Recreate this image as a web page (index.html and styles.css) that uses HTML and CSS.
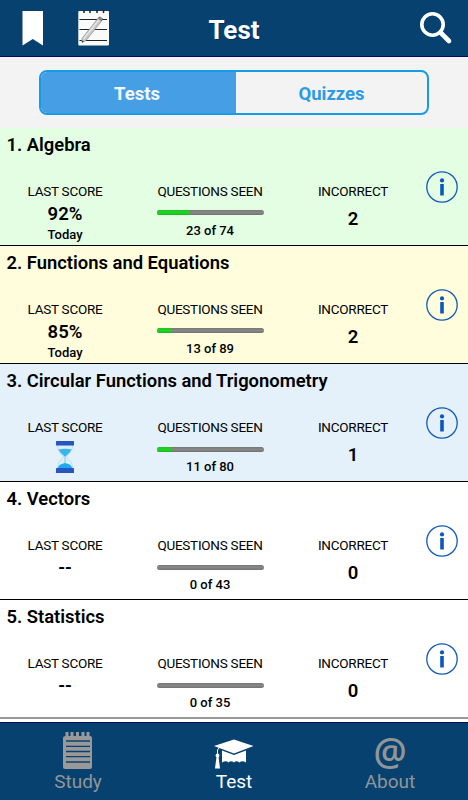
FILE: index.html
```html
<!DOCTYPE html>
<html lang="en">
<head>
<meta charset="utf-8">
<title>Test</title>
<link rel="stylesheet" href="styles.css">
</head>
<body>
<svg width="0" height="0" class="defs" aria-hidden="true">
  <symbol id="info" viewBox="0 0 32 32">
    <circle cx="16" cy="16" r="15.2" fill="none" stroke="#1259b8" stroke-width="1.3"/>
    <circle cx="16" cy="9.4" r="2.1" fill="#0b57c0"/>
    <rect x="14.2" y="13" width="3.6" height="11.5" fill="#0b57c0"/>
  </symbol>
</svg>
<header class="topbar">
  <svg class="bookmark" width="22" height="36" viewBox="0 0 22 36"><path d="M.5 0H21v34.500L10.800 28 .5 34.500z" fill="#fff"/></svg>
  <svg class="notes" width="32" height="36" viewBox="0 0 32 36">
    <rect x=".3" y="1" width="30.700" height="34.500" rx="1" fill="#fafafa"/>
    <path d="M6 0v3M12 0v3M19 0v3M25.500 0v3" stroke="#222" stroke-width="1.500"/>
    <path d="M1.500 9.500h27.500M1.500 19.500h27.500M1.500 30.500h27.500" stroke="#222" stroke-width="1.100"/>
    <path d="M4 28.500 20 8.300 23.800 10.700 8 30.500 4 32.500z" fill="#c9c9c9" stroke="#888" stroke-width=".7"/>
    <path d="M5.500 29 21.500 9" stroke="#eee" stroke-width="1.200"/>
    <path d="M20 8.300 21.500 6.800 24.500 8.500 23.800 10.700z" fill="#999" stroke="#666" stroke-width=".7"/>
    <path d="M4 30.500 4 32.500 6 31.500z" fill="#333"/>
  </svg>
  <h1>Test</h1>
  <svg class="search" width="34" height="34" viewBox="0 0 34 34"><circle cx="12.500" cy="13.500" r="10.700" fill="none" stroke="#fff" stroke-width="3.600"/><path d="M20.500 21.500 29 30" stroke="#fff" stroke-width="4.600" stroke-linecap="round"/></svg>
</header>
<nav class="switcher">
  <div class="segments"><span class="segment active">Tests</span><span class="segment">Quizzes</span></div>
</nav>
<main>
  <section class="row green">
    <h2>1. Algebra</h2>
    <div class="stats">
      <div class="stat"><span class="label">LAST SCORE</span><b class="score">92%</b><span class="small day">Today</span></div>
      <div class="stat"><span class="label">QUESTIONS SEEN</span><div class="track"><div class="fill" style="width:31%"></div></div><span class="small">23 of 74</span></div>
      <div class="stat"><span class="label">INCORRECT</span><b class="wrong">2</b></div>
      <svg class="info"><use href="#info"/></svg>
    </div>
  </section>
  <section class="row yellow">
    <h2>2. Functions and Equations</h2>
    <div class="stats">
      <div class="stat"><span class="label">LAST SCORE</span><b class="score">85%</b><span class="small day">Today</span></div>
      <div class="stat"><span class="label">QUESTIONS SEEN</span><div class="track"><div class="fill" style="width:14.600%"></div></div><span class="small">13 of 89</span></div>
      <div class="stat"><span class="label">INCORRECT</span><b class="wrong">2</b></div>
      <svg class="info"><use href="#info"/></svg>
    </div>
  </section>
  <section class="row blue">
    <h2>3. Circular Functions and Trigonometry</h2>
    <div class="stats">
      <div class="stat"><span class="label">LAST SCORE</span>
        <svg class="hourglass" width="20" height="34" viewBox="0 0 20 34">
          <path d="M2.500 5C2.500 11 6 13 8.500 17 6 20 2.500 22 2.500 28H17.500C17.500 22 14 20 11.500 17 14 13 17.500 11 17.500 5z" fill="#d9f1fc" stroke="#b3d6ee" stroke-width=".8"/>
          <path d="M3.500 9.500Q10 8 16.500 9.500C15 13 12.500 14 10 17 7.500 14 5 13 3.500 9.500z" fill="#36b5ee"/>
          <path d="M3 28C3.500 25 6 24 10 23 14 24 16.500 25 17 28z" fill="#20a9ec"/>
          <path d="M10 17v6" stroke="#60c3ef" stroke-width=".8"/>
          <rect x="1" y="1" width="18" height="4.500" rx=".6" fill="#2856c0"/><rect x="1" y="28" width="18" height="5" rx=".6" fill="#2856c0"/>
        </svg></div>
      <div class="stat"><span class="label">QUESTIONS SEEN</span><div class="track"><div class="fill" style="width:13.800%"></div></div><span class="small">11 of 80</span></div>
      <div class="stat"><span class="label">INCORRECT</span><b class="wrong">1</b></div>
      <svg class="info"><use href="#info"/></svg>
    </div>
  </section>
  <section class="row">
    <h2>4. Vectors</h2>
    <div class="stats">
      <div class="stat"><span class="label">LAST SCORE</span><b class="score">--</b></div>
      <div class="stat"><span class="label">QUESTIONS SEEN</span><div class="track"></div><span class="small">0 of 43</span></div>
      <div class="stat"><span class="label">INCORRECT</span><b class="wrong">0</b></div>
      <svg class="info"><use href="#info"/></svg>
    </div>
  </section>
  <section class="row last">
    <h2>5. Statistics</h2>
    <div class="stats">
      <div class="stat"><span class="label">LAST SCORE</span><b class="score">--</b></div>
      <div class="stat"><span class="label">QUESTIONS SEEN</span><div class="track"></div><span class="small">0 of 35</span></div>
      <div class="stat"><span class="label">INCORRECT</span><b class="wrong">0</b></div>
      <svg class="info"><use href="#info"/></svg>
    </div>
  </section>
</main>
<footer class="tabs">
  <div class="tab">
    <svg width="30" height="38" viewBox="0 0 30 38"><path d="M3 4H27Q29 4 29 6V35Q29 37 27 37H2Q0 37 0 35V6Q0 4 3 4z" fill="#999"/><path d="M4 0v5M9 0v5M14.500 0v5M20 0v5M25 0v5" stroke="#999" stroke-width="3"/><path d="M3 9h24M3 14.300h24M3 19.500h24M3 24.700h24M3 30h24" stroke="#07416f" stroke-width="1.300"/></svg>
    <span>Study</span>
  </div>
  <div class="tab current">
    <svg width="40" height="38" viewBox="0 0 40 38"><path d="M0 14 20 7.500 39.500 14 20 21.500z" fill="#fff"/><path d="M8 18.500 20 23 32 18.500V30.500Q28 28 25.500 30.500 22 28 20 30.500 17 28 14.500 30.500 12 28 8 30.500z" fill="#fff"/><path d="M5 16 3.500 18v5" fill="none" stroke="#fff" stroke-width="1"/><circle cx="3.500" cy="23.500" r="1.900" fill="#fff"/><path d="M2.500 25H4.600L6 36.500H1z" fill="#fff"/></svg>
    <span>Test</span>
  </div>
  <div class="tab"><div class="at">@</div><span>About</span></div>
</footer>
</body>
</html>
```
FILE: styles.css
```css
* { box-sizing: border-box; }
body { margin: 0; width: 468px; height: 800px; overflow: hidden; display: flex; flex-direction: column; background: #fff; color: #000; font-family: Roboto, "Liberation Sans", sans-serif; }
h1, h2 { margin: 0; }
.defs { position: absolute; }
.topbar { height: 57px; flex: none; display: grid; grid-template-columns: 22px 90px 200px 134px; padding-left: 22px; background: #07416f; border-bottom: 1px solid #000a5c; }
.bookmark { margin-top: 11px; }
.notes { margin: 10px 0 0 34px; }
.topbar h1 { color: #fff; font-size: 26px; line-height: 60px; font-weight: 700; text-align: center; text-shadow: 1px 1px #032b66; }
.search { margin: 11px 0 0 86px; }
.switcher { height: 71px; flex: none; padding: 13px 39px; background: #f3f3f3; }
.segments { display: flex; height: 45px; border: 2px solid #189be5; border-radius: 8px; overflow: hidden; }
.segment { flex: 1; text-align: center; font-size: 18.5px; line-height: 44px; font-weight: 700; color: #2c9be5; }
.segment.active { flex: 0 0 195px; padding-right: 3px; background: #469fe5; color: #f3f8fc; }
main { height: 594px; flex: none; display: flex; flex-direction: column; background: #fff; }
.row { height: 118px; flex: none; border-bottom: 1px solid #000; }
.row.last { height: 119px; border-bottom: 2px solid #999; }
.green { background: #e3fee3; }
.yellow { background: #fffddc; }
.blue { background: #e4f1fb; }
.row h2 { height: 42px; padding: 6px 0 0 6.5px; font-size: 18.4px; line-height: 22px; font-weight: 570; }
.stats { display: grid; grid-template-columns: 130px 160px 126px 52px; }
.stat { display: flex; flex-direction: column; align-items: center; padding-top: 13px; height: 75px; }
.label { font-size: 13.5px; line-height: 17px; font-weight: 370; letter-spacing: -.25px; }
.score, .wrong { font-size: 18.5px; line-height: 20px; font-weight: 570; }
.score { margin-top: 4px; }
.wrong { margin-top: 9px; }
.small { font-size: 13px; line-height: 16px; font-weight: 550; margin-top: 8px; }
.day { margin-top: 3px; }
.track { width: 107px; height: 5px; border-radius: 3px; margin-top: 10px; overflow: hidden; background: linear-gradient(#777, #888 50%, #727272); }
.blue .track, .blue ~ .row .track { margin-top: 11px; }
.blue .small, .blue ~ .row .small { margin-top: 7px; }
.fill { height: 5px; background: linear-gradient(#1cc522, #20d327 50%, #18b91d); }
.info { width: 32px; height: 32px; margin: .5px 0 0 10px; }
.hourglass { margin-top: 4px; }
.tabs { height: 78px; flex: none; display: grid; grid-template-columns: repeat(3, 156px); background: #07416f; border-top: 1px solid #000a5c; }
.tab { display: flex; flex-direction: column; align-items: center; padding-top: 9px; color: #929598; }
.tab > svg { flex: none; }
.tab span { font-size: 19px; line-height: 22px; margin-top: 1px; }
.tab.current { color: #fff; }
.at { height: 38px; font: 600 37px/38px "Open Sans", sans-serif; }
```
